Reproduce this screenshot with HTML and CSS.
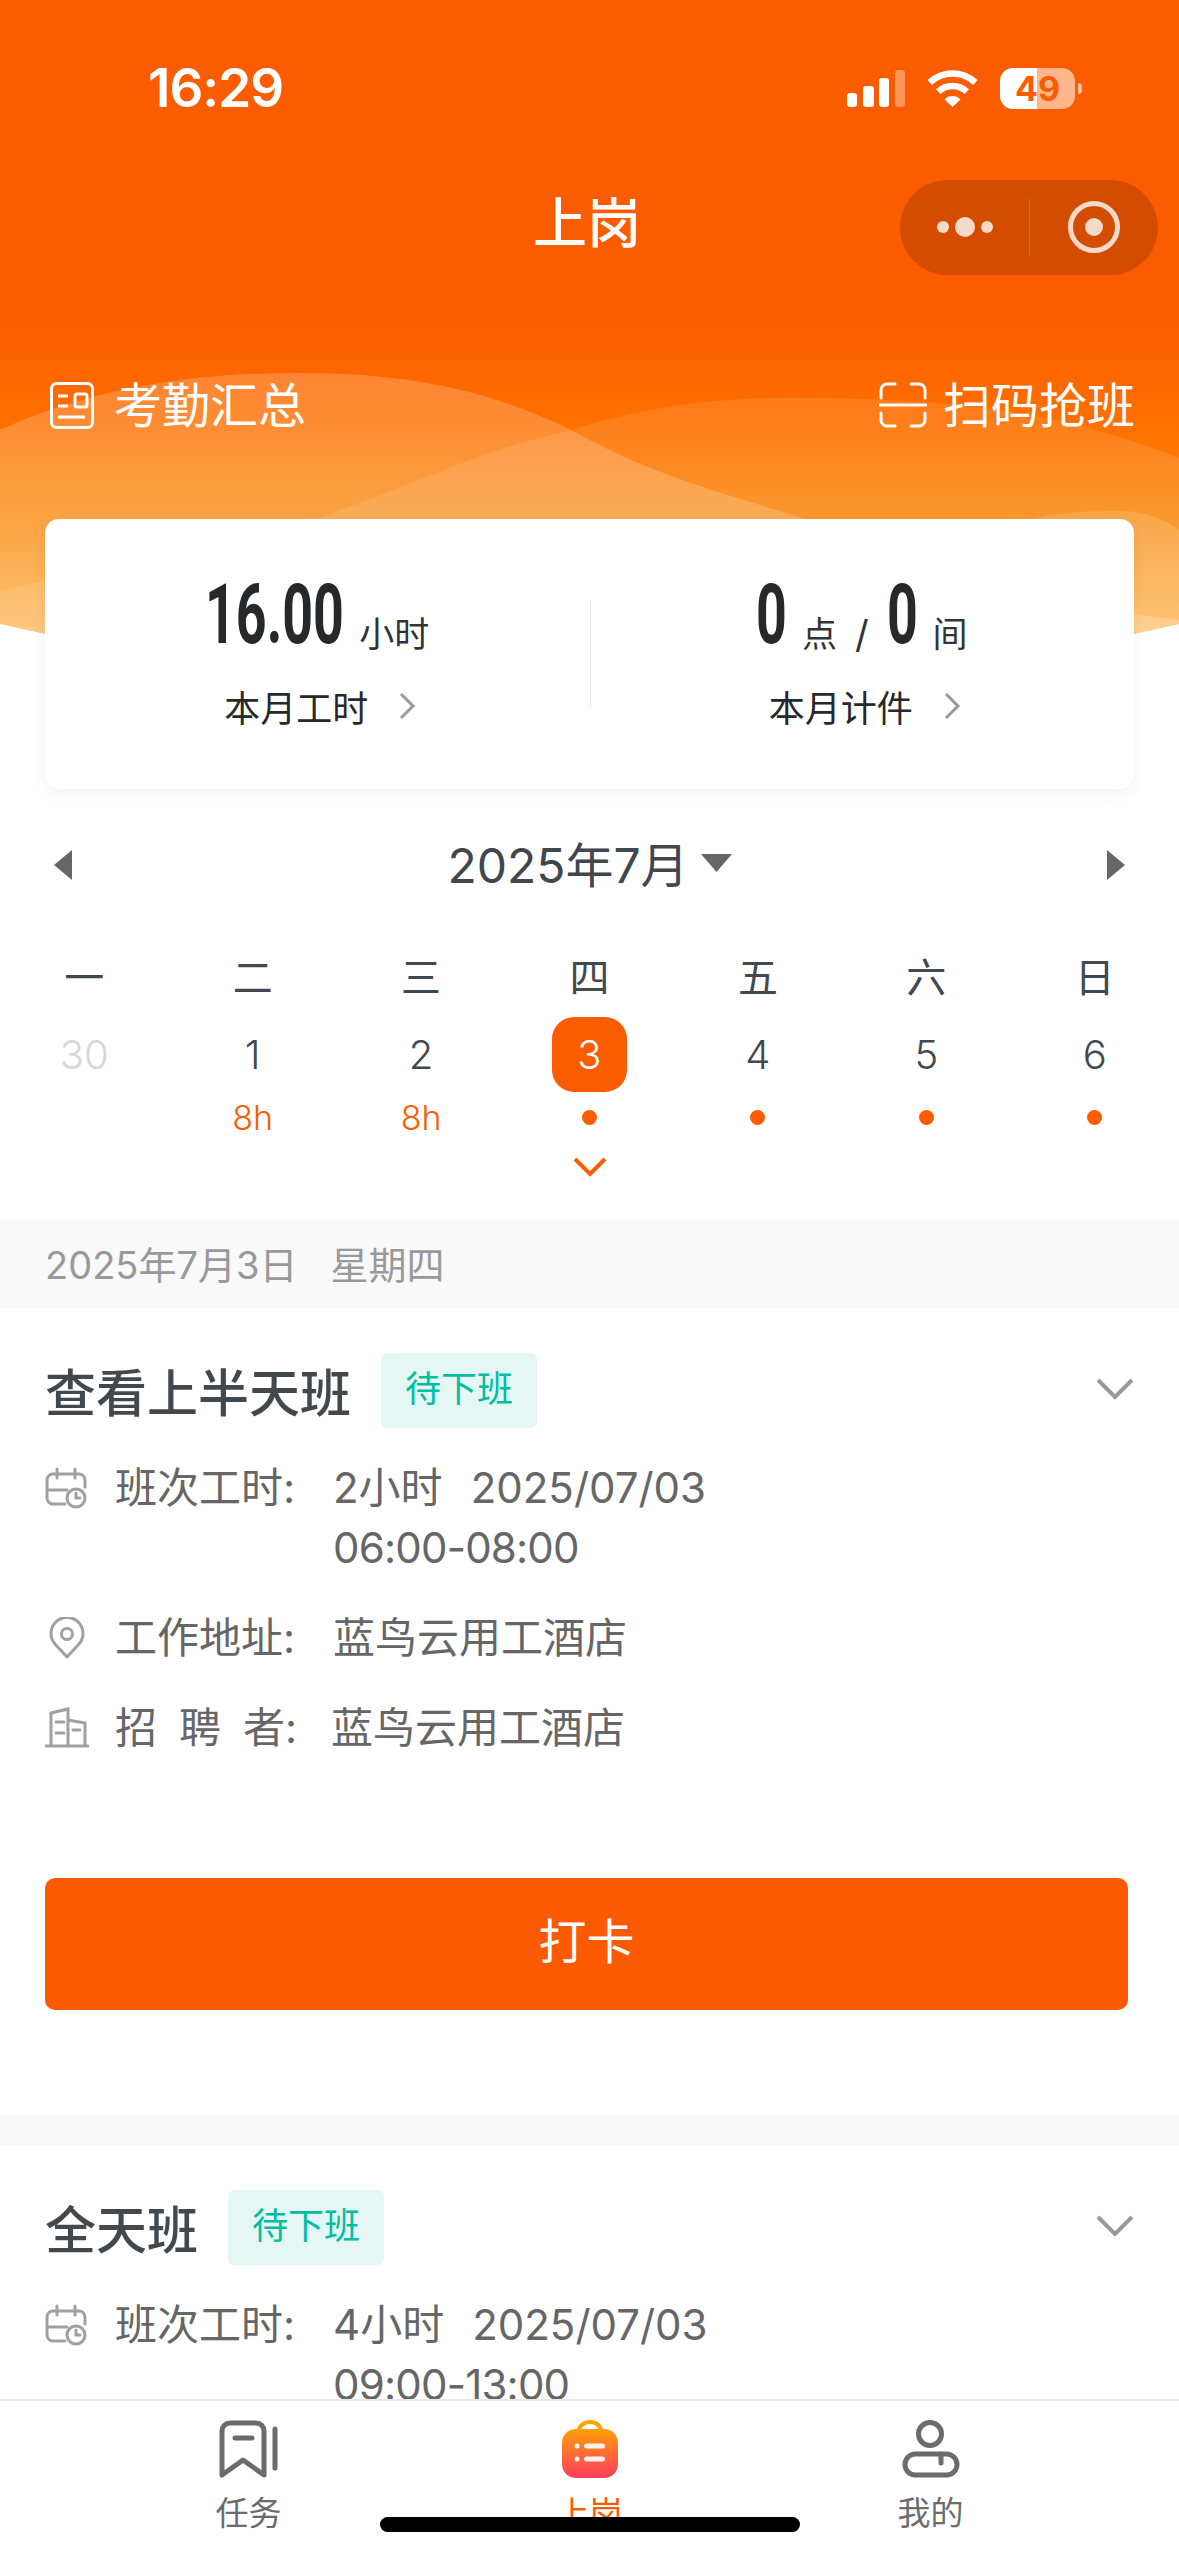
FILE: index.html
```html
<!DOCTYPE html>
<html lang="zh-CN">
<head>
  <meta charset="utf-8">
  <title>上岗</title>
  <link rel="stylesheet" href="styles.css">
</head>
<body>
  <div class="page">
    <div class="main">
      <!-- Orange header with the monthly summary -->
      <div class="hero">
        <svg class="hero-bg" width="1179" height="800" viewBox="0 0 1179 800">
          <defs>
            <linearGradient id="heroFill" gradientUnits="userSpaceOnUse" x1="0" y1="0" x2="0" y2="640">
              <stop offset="0.5" stop-color="#fc5c00"/>
              <stop offset="0.66" stop-color="#fe7000"/>
              <stop offset="0.82" stop-color="#fa8f17"/>
              <stop offset="1" stop-color="#ffb650"/>
            </linearGradient>
            <clipPath id="heroClip">
              <path d="M0 624Q589 760 1179 624V0H0Z"/>
            </clipPath>
          </defs>
          <g clip-path="url(#heroClip)">
            <rect width="1179" height="800" fill="url(#heroFill)"/>
            <path fill="#fff" fill-opacity=".2" d="M0 430C100 385 200 373 300 373C420 373 500 395 571 430C650 475 730 495 805 519C900 560 1000 600 1179 620V800H0Z"/>
            <path fill="#fff" fill-opacity=".1" d="M0 592C100 565 230 545 316 519C400 490 480 450 571 430C650 405 720 398 790 398C950 398 1060 410 1179 458V800H0Z"/>
            <path fill="#fff" fill-opacity=".15" d="M1030 519C1060 512 1090 511 1120 511C1145 511 1165 520 1179 530V800H1000Z"/>
          </g>
        </svg>

        <div class="status-bar">
          <span class="status-time">16:29</span>
          <div class="status-icons">
            <svg width="58" height="37" viewBox="0 0 58 37" fill="#fff">
              <rect x="0" y="23" width="10" height="14" rx="3"/>
              <rect x="16" y="16" width="11" height="21" rx="3"/>
              <rect x="32" y="8" width="10" height="29" rx="3"/>
              <rect x="48" y="0" width="10" height="37" rx="3" fill-opacity=".35"/>
            </svg>
            <svg width="51" height="37" viewBox="0 0 51 37" fill="none" stroke="#fff" stroke-width="6.5">
              <path d="M2.7 12.5A33.5 33.5 0 0 1 48.3 12.5"/>
              <path d="M11.2 21.6A21 21 0 0 1 39.8 21.6"/>
              <path fill="#fff" stroke="none" d="M25.5 37L17.5 29.5A11 11 0 0 1 33.5 29.5Z"/>
            </svg>
            <div class="battery">49</div>
          </div>
        </div>

        <div class="nav-bar">
          <span></span>
          <span class="nav-title">上岗</span>
          <div class="capsule">
            <svg width="129" height="95" viewBox="0 0 129 95" fill="#f5d9cb">
              <circle cx="43" cy="47" r="6"/>
              <circle cx="65" cy="47" r="10"/>
              <circle cx="87" cy="47" r="6"/>
            </svg>
            <span class="capsule-line"></span>
            <svg width="128" height="95" viewBox="0 0 128 95" fill="#f5d9cb">
              <circle cx="64" cy="47" r="23.5" fill="none" stroke="#f5d9cb" stroke-width="5"/>
              <circle cx="64" cy="47" r="9"/>
            </svg>
          </div>
        </div>

        <div class="hero-links">
          <div class="hero-link">
            <svg width="44" height="47" viewBox="0 0 44 47" fill="none" stroke="#fff" stroke-width="3">
              <rect x="1.5" y="1.5" width="41" height="44" rx="5"/>
              <path d="M8 14h10M8 24h10M8 35h27"/>
              <rect x="25" y="12" width="12" height="13" rx="2"/>
            </svg>
            <span>考勤汇总</span>
          </div>
          <div class="hero-link hero-link-scan">
            <svg width="48" height="46" viewBox="0 0 48 46" fill="none" stroke="#fff" stroke-width="3" stroke-linecap="round">
              <path d="M16 2H8a6 6 0 0 0-6 6v8M32 2h8a6 6 0 0 1 6 6v8M2 31v7a6 6 0 0 0 6 6h8M46 31v7a6 6 0 0 1-6 6h-8M1 23h46"/>
            </svg>
            <span>扫码抢班</span>
          </div>
        </div>

        <div class="summary">
          <div class="summary-col">
            <div class="summary-value">
              <span class="num num-wide">16.00</span>
              <span class="unit">小时</span>
            </div>
            <div class="summary-label">
              <span>本月工时</span>
              <svg width="18" height="28" viewBox="0 0 18 28" fill="none" stroke="#999" stroke-width="3"><path d="M3 2l12 12-12 12"/></svg>
            </div>
          </div>
          <div class="summary-col summary-col-right">
            <div class="summary-value">
              <span class="num num-one">0</span>
              <span class="unit">点</span>
              <span class="unit slash">/</span>
              <span class="num num-one">0</span>
              <span class="unit">间</span>
            </div>
            <div class="summary-label">
              <span>本月计件</span>
              <svg width="18" height="28" viewBox="0 0 18 28" fill="none" stroke="#999" stroke-width="3"><path d="M3 2l12 12-12 12"/></svg>
            </div>
          </div>
        </div>
      </div>

      <!-- Week calendar -->
      <div class="calendar">
        <div class="cal-head">
          <svg width="18" height="30" viewBox="0 0 18 30" fill="#666"><path d="M18 0V30L0 15Z"/></svg>
          <div class="cal-month">
            <span>2025年7月</span>
            <svg width="31" height="18" viewBox="0 0 31 18" fill="#666"><path d="M0 0H31L15.5 18Z"/></svg>
          </div>
          <svg width="18" height="30" viewBox="0 0 18 30" fill="#666"><path d="M0 0V30L18 15Z"/></svg>
        </div>

        <div class="week-row week-names">
          <span>一</span><span>二</span><span>三</span><span>四</span><span>五</span><span>六</span><span>日</span>
        </div>
        <div class="week-row week-dates">
          <span class="date-off">30</span>
          <span>1</span>
          <span>2</span>
          <span class="date-today">3</span>
          <span>4</span>
          <span>5</span>
          <span>6</span>
        </div>
        <div class="week-row week-marks">
          <span></span>
          <span>8h</span>
          <span>8h</span>
          <span><i class="dot"></i></span>
          <span><i class="dot"></i></span>
          <span><i class="dot"></i></span>
          <span><i class="dot"></i></span>
        </div>
        <svg class="cal-expand" width="34" height="20" viewBox="0 0 34 20" fill="none" stroke="#fc5c00" stroke-width="4"><path d="M2 2l15 15L32 2"/></svg>
      </div>

      <div class="date-band"><span>2025年7月3日</span><span>星期四</span></div>

      <!-- Shift cards -->
      <div class="shift">
        <div class="shift-head">
          <span class="shift-title">查看上半天班</span>
          <span class="badge">待下班</span>
          <svg class="shift-toggle" width="38" height="22" viewBox="0 0 38 22" fill="none" stroke="#999" stroke-width="4"><path d="M2 2l17 17L36 2"/></svg>
        </div>
        <div class="shift-rows">
          <div class="row">
            <svg class="row-icon" width="44" height="42" viewBox="0 0 44 42" fill="none" stroke="#a0a0a0" stroke-width="3" stroke-linecap="round">
              <path d="M20 37H8a6 6 0 0 1-6-6V13a6 6 0 0 1 6-6H34a6 6 0 0 1 6 6v7M2 23H22M12 2v9M30 2v9M31 26v5h4"/>
              <circle cx="31" cy="31" r="9"/>
            </svg>
            <span class="row-label">班次工时:</span>
            <div class="row-value">
              <div><span class="hours">2小时</span>2025/07/03</div>
              <div class="time-range">06:00-08:00</div>
            </div>
          </div>
          <div class="row">
            <svg class="row-icon" width="44" height="42" viewBox="0 0 44 42" fill="none" stroke="#a0a0a0" stroke-width="3" stroke-linejoin="round">
              <path d="M22 40L10 27A16 16 0 1 1 34 27Z"/>
              <circle cx="22" cy="17" r="5.5"/>
            </svg>
            <span class="row-label">工作地址:</span>
            <div class="row-value">蓝鸟云用工酒店</div>
          </div>
          <div class="row">
            <svg class="row-icon" width="44" height="42" viewBox="0 0 44 42" fill="none" stroke="#a0a0a0" stroke-width="3" stroke-linecap="round">
              <path d="M1 39H43M6 39V6L23 2V39M23 13L40 16V39M11 15H19M11 26H19M28 23H35"/>
            </svg>
            <span class="row-label row-label-narrow"><span class="spread">招聘</span>者:</span>
            <div class="row-value">蓝鸟云用工酒店</div>
          </div>
        </div>
        <button class="punch">打卡</button>
      </div>

      <div class="gap-band"></div>

      <div class="shift">
        <div class="shift-head">
          <span class="shift-title">全天班</span>
          <span class="badge">待下班</span>
          <svg class="shift-toggle" width="38" height="22" viewBox="0 0 38 22" fill="none" stroke="#999" stroke-width="4"><path d="M2 2l17 17L36 2"/></svg>
        </div>
        <div class="shift-rows">
          <div class="row">
            <svg class="row-icon" width="44" height="42" viewBox="0 0 44 42" fill="none" stroke="#a0a0a0" stroke-width="3" stroke-linecap="round">
              <path d="M20 37H8a6 6 0 0 1-6-6V13a6 6 0 0 1 6-6H34a6 6 0 0 1 6 6v7M2 23H22M12 2v9M30 2v9M31 26v5h4"/>
              <circle cx="31" cy="31" r="9"/>
            </svg>
            <span class="row-label">班次工时:</span>
            <div class="row-value">
              <div><span class="hours">4小时</span>2025/07/03</div>
              <div class="time-range">09:00-13:00</div>
            </div>
          </div>
        </div>
      </div>
    </div>

    <!-- Bottom tabs -->
    <div class="tabbar">
      <div class="tab">
        <svg width="60" height="58" viewBox="0 0 60 58" fill="none" stroke="#6b6b6b" stroke-width="5" stroke-linejoin="round" stroke-linecap="round">
          <path d="M3 55V11a8 8 0 0 1 8-8H37a8 8 0 0 1 8 8V55L24 40Z"/>
          <path d="M16 18H33M56 9V48"/>
        </svg>
        <span>任务</span>
      </div>
      <div class="tab tab-active">
        <svg width="56" height="58" viewBox="0 0 56 58">
          <defs>
            <linearGradient id="bagFill" x1="0" y1="0" x2="0" y2="1">
              <stop offset="0" stop-color="#ff9f0a"/>
              <stop offset="1" stop-color="#ff3c5e"/>
            </linearGradient>
          </defs>
          <path d="M17 12V11a11 9 0 0 1 22 0V12" fill="none" stroke="#ffa500" stroke-width="4"/>
          <rect x="0" y="9" width="56" height="49" rx="14" fill="url(#bagFill)"/>
          <circle cx="15" cy="26" r="2.5" fill="#fff" fill-opacity=".9"/>
          <circle cx="15" cy="39" r="2.5" fill="#fff" fill-opacity=".9"/>
          <rect x="22" y="23.500" width="21" height="5" rx="2.500" fill="#fff" fill-opacity=".9"/>
          <rect x="22" y="36.500" width="21" height="5" rx="2.500" fill="#fff" fill-opacity=".9"/>
        </svg>
        <span>上岗</span>
      </div>
      <div class="tab">
        <svg width="58" height="58" viewBox="0 0 58 58" fill="none" stroke="#6b6b6b" stroke-width="5" stroke-linecap="round">
          <circle cx="28" cy="14" r="11.500"/>
          <rect x="3" y="34" width="52" height="21" rx="10.500"/>
          <path d="M39 34V43"/>
        </svg>
        <span>我的</span>
      </div>
    </div>

    <div class="home-indicator"></div>
  </div>
</body>
</html>
```

FILE: styles.css
```css
/* General page styles */
* {
  box-sizing: border-box;
}

body {
  margin: 0;
  font-family: Inter, "Noto Sans CJK SC", sans-serif;
  color: #666;
  background: #fff;
}

.page {
  position: relative;
  display: flex;
  flex-direction: column;
  width: 1179px;
  height: 2556px;
  overflow: hidden;
  background: #fff;
}

.main {
  flex: 1;
  min-height: 0;
  overflow: hidden;
}

/* Header */
.hero {
  position: relative;
  height: 789px;
}

.hero-bg {
  position: absolute;
  top: 0;
  left: 0;
}

.status-bar,
.nav-bar,
.hero-links,
.summary {
  position: relative;
}

.status-bar {
  display: flex;
  justify-content: space-between;
  align-items: center;
  height: 180px;
  padding: 0 104px 4px 148px;
  color: #fff;
}

.status-time {
  font-size: 53px;
  font-weight: 600;
  letter-spacing: -1px;
}

.status-icons {
  display: flex;
  align-items: center;
  gap: 22px;
}

.battery {
  position: relative;
  width: 75px;
  height: 41px;
  border-radius: 13px;
  background: linear-gradient(90deg, #fff 50%, rgba(255, 255, 255, 0.55) 50%);
  color: #fc5c00;
  font-size: 34px;
  font-weight: 700;
  line-height: 41px;
  text-align: center;
}

.battery::after {
  content: "";
  position: absolute;
  top: 15px;
  right: -7px;
  width: 4px;
  height: 11px;
  border-radius: 0 4px 4px 0;
  background: rgba(255, 255, 255, 0.6);
}

.nav-bar {
  display: grid;
  grid-template-columns: 1fr auto 1fr;
  align-items: center;
  height: 95px;
  padding-right: 21px;
}

.nav-title {
  padding: 0 0 16px 16px;
  color: #fff;
  font-size: 54px;
  font-weight: 500;
}

.capsule {
  display: flex;
  align-items: center;
  justify-self: end;
  width: 258px;
  height: 95px;
  border-radius: 48px;
  background: #d34c00;
}

.capsule-line {
  width: 1px;
  height: 59px;
  background: #dd6420;
}

.hero-links {
  display: flex;
  justify-content: space-between;
  margin-top: 97px;
  height: 60px;
  padding: 0 44px 0 50px;
}

.hero-link {
  display: flex;
  align-items: center;
  gap: 20px;
  color: #fff;
  font-size: 48px;
}

.hero-link-scan {
  gap: 16px;
}

.hero-link svg {
  margin-top: 6px;
}

/* Monthly summary card */
.summary {
  display: flex;
  height: 270px;
  margin: 87px 45px 0;
  border-radius: 14px;
  background: #fff;
  box-shadow: 0 4px 16px rgba(0, 0, 0, 0.06);
}

.summary-col {
  flex: 1;
  display: flex;
  flex-direction: column;
  align-items: center;
  padding-top: 54px;
}

.summary-col-right {
  position: relative;
}

.summary-col-right::before {
  content: "";
  position: absolute;
  top: 81px;
  left: 0;
  width: 1px;
  height: 108px;
  background: #e8e8e8;
}

.summary-value {
  display: flex;
  align-items: flex-end;
  gap: 18px;
  height: 84px;
  color: #26282b;
}

.num {
  display: inline-block;
  font-family: Roboto, sans-serif;
  font-size: 84px;
  font-weight: 700;
  line-height: 84px;
  transform: scaleX(0.64);
  transform-origin: left;
}

.num-wide {
  width: 136px;
}

.num-one {
  width: 28px;
}

.unit {
  font-size: 35px;
  line-height: 46px;
  color: #333;
}

.slash {
  font-size: 38px;
}

.summary-label {
  display: flex;
  align-items: center;
  gap: 30px;
  margin-top: 23px;
  padding-left: 6px;
  color: #26282b;
  font-size: 36px;
}

/* Calendar */
.calendar {
  display: flex;
  flex-direction: column;
  height: 432px;
  padding-top: 43px;
}

.cal-head {
  display: flex;
  justify-content: space-between;
  align-items: center;
  height: 60px;
  padding: 0 54px;
}

.cal-head > svg {
  margin-top: 6px;
}

.cal-month {
  display: flex;
  align-items: center;
  gap: 12px;
  color: #3f474f;
  font-size: 48px;
}

.cal-month svg {
  margin-top: 2px;
}

.week-row {
  display: grid;
  grid-template-columns: repeat(7, 1fr);
  justify-items: center;
  align-items: center;
}

.week-names {
  height: 60px;
  margin-top: 53px;
  color: #41494f;
  font-size: 40px;
}

.week-dates {
  height: 75px;
  margin-top: 12px;
  color: #41494f;
  font-size: 40px;
  font-weight: 300;
}

.date-off {
  color: #d6d6d6;
}

.date-today {
  width: 75px;
  height: 75px;
  border-radius: 22px;
  background: #fc5c00;
  color: #fff;
  line-height: 75px;
  text-align: center;
}

.week-marks {
  height: 50px;
  color: #fc5c00;
  font-size: 34px;
  font-weight: 300;
}

.dot {
  display: block;
  width: 15px;
  height: 15px;
  border-radius: 50%;
  background: #fc5c00;
}

.cal-expand {
  align-self: center;
  margin-top: 15px;
}

.date-band {
  display: flex;
  align-items: center;
  gap: 33px;
  height: 87px;
  padding: 0 0 5px 45px;
  background: #f9f9f9;
  color: #999;
  font-size: 38px;
}

/* Shift cards */
.shift {
  padding: 45px 45px 105px;
}

.shift-head {
  display: flex;
  align-items: center;
  height: 75px;
}

.shift-title {
  margin-right: 30px;
  padding-bottom: 2px;
  color: #41494f;
  font-size: 51px;
  font-weight: 500;
}

.badge {
  height: 75px;
  padding: 0 24px;
  border-radius: 6px;
  background: #e5f7f4;
  color: #00bfa0;
  font-size: 36px;
  line-height: 72px;
}

.shift-toggle {
  margin: 0 0 3px auto;
}

.shift-rows {
  display: flex;
  flex-direction: column;
  gap: 30px;
  margin-top: 30px;
}

.row {
  display: flex;
  align-items: flex-start;
  font-size: 42px;
  line-height: 60px;
}

.row-icon {
  flex: none;
  margin: 9px 26px 0 0;
}

.row-label {
  flex: none;
  width: 218px;
}

.row-label-narrow {
  width: 216px;
}

.spread {
  letter-spacing: 22px;
}

.hours {
  margin-right: 28px;
}

.time-range {
  letter-spacing: -0.8px;
}

.punch {
  display: block;
  width: 1083px;
  height: 132px;
  margin-top: 120px;
  padding: 0 0 12px;
  border: none;
  border-radius: 10px;
  background: #fb5a02;
  color: #fff;
  font-family: inherit;
  font-size: 48px;
}

.gap-band {
  height: 30px;
  background: #f9f9f9;
}

/* Bottom tabs */
.tabbar {
  flex: none;
  display: flex;
  justify-content: center;
  height: 157px;
  padding-top: 19px;
  border-top: 2px solid #e8e8e8;
  background: #fff;
}

.tab {
  display: flex;
  flex-direction: column;
  align-items: center;
  width: 341px;
  color: #6b6b6b;
  font-size: 33px;
}

.tab span {
  margin-top: 9px;
}

.tab-active {
  color: #fc5c00;
}

.home-indicator {
  position: absolute;
  left: 380px;
  bottom: 24px;
  width: 420px;
  height: 15px;
  border-radius: 8px;
  background: #000;
}
```
